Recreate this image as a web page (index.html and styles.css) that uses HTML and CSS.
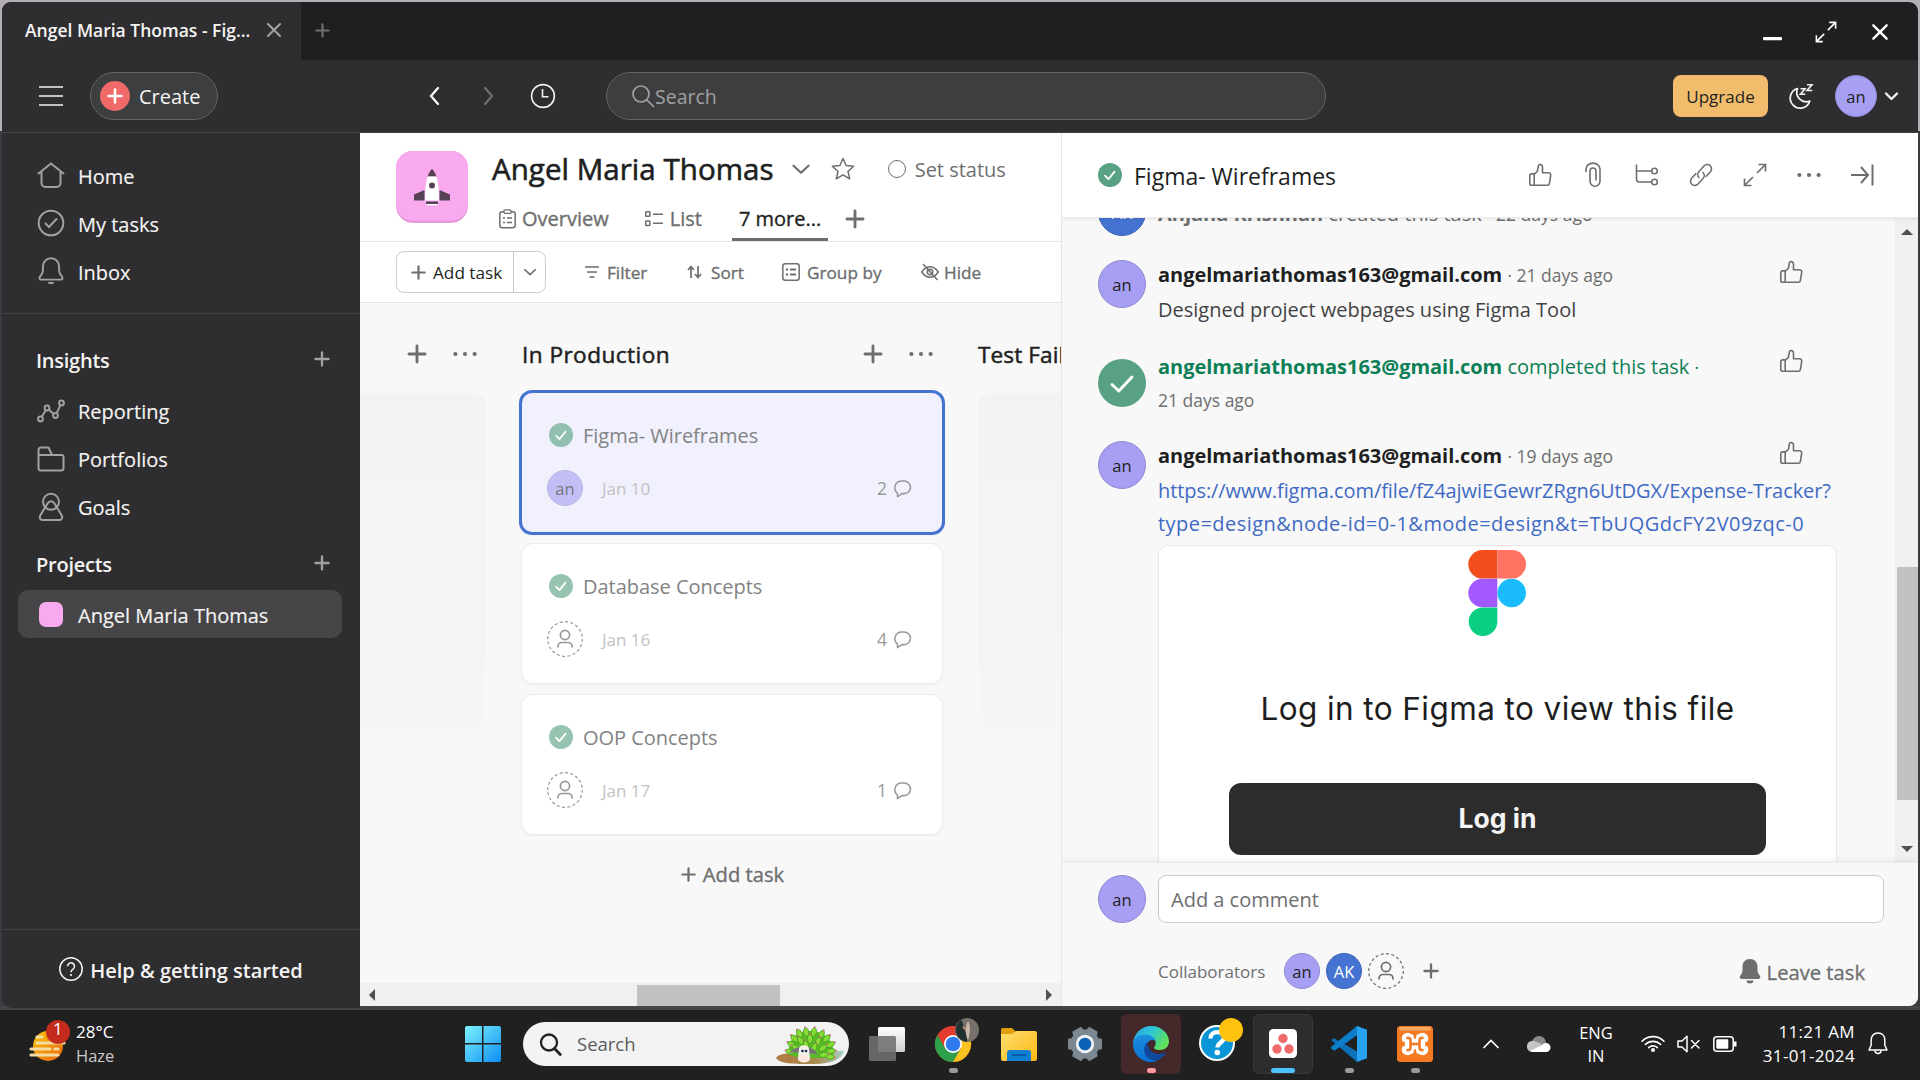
FILE: index.html
```html
<!DOCTYPE html>
<html lang="en">
<head>
<meta charset="utf-8">
<title>Angel Maria Thomas - Figma Wireframes</title>
<link rel="stylesheet" href="styles.css">
</head>
<body>
<svg class="defs" width="0" height="0" aria-hidden="true">
  <symbol id="plus" viewBox="0 0 24 24"><path d="M12 3.200v17.600M3.200 12h17.600" fill="none" stroke="currentColor" stroke-width="3.100" stroke-linecap="round"/></symbol>
  <symbol id="close" viewBox="0 0 24 24"><path d="M4 4l16 16M20 4L4 20" fill="none" stroke="currentColor" stroke-width="2.8" stroke-linecap="round"/></symbol>
  <symbol id="chev-down" viewBox="0 0 24 24"><path d="M3 8l9 8.5L21 8" fill="none" stroke="currentColor" stroke-width="2.6" stroke-linecap="round" stroke-linejoin="round"/></symbol>
  <symbol id="dots" viewBox="0 0 24 24"><g fill="currentColor"><circle cx="2.4" cy="12" r="2.1"/><circle cx="12" cy="12" r="2.1"/><circle cx="21.6" cy="12" r="2.1"/></g></symbol>
  <symbol id="done" viewBox="0 0 24 24"><circle cx="12" cy="12" r="12" fill="#58a182"/><path d="M7 12.6l3.4 3.5L16.6 8.6" fill="none" stroke="#fff" stroke-width="1.7" stroke-linecap="round" stroke-linejoin="round"/></symbol>
  <symbol id="thumb" viewBox="0 0 24 24"><path d="M6.2 22.3H3.4a1.6 1.6 0 0 1-1.6-1.6v-8.2a1.6 1.6 0 0 1 1.6-1.6h2.8zM6.2 11.2l3.1-2.7 1.2-6c.3-1.4 4-1.5 4 1.700v5.600h6a2.200 2.200 0 0 1 2.200 2.600l-1.300 8a2.200 2.200 0 0 1-2.200 1.900h-13z" fill="none" stroke="currentColor" stroke-width="1.6" stroke-linejoin="round"/></symbol>
  <symbol id="expand" viewBox="0 0 24 24"><path d="M14 10l8.500-8.500M15.500 1.500h7v7M10 14l-8.500 8.500M1.500 15.500v7h7" fill="none" stroke="currentColor" stroke-width="1.700"/></symbol>
  <symbol id="person" viewBox="0 0 36 36"><circle cx="18" cy="18" r="17.300" fill="none" stroke="currentColor" stroke-width="1.200" stroke-dasharray="3 2.400"/><circle cx="18" cy="14" r="4.600" fill="none" stroke="currentColor" stroke-width="1.700"/><path d="M11 26.500v-1a4 4 0 0 1 4-4h6a4 4 0 0 1 4 4v1" fill="none" stroke="currentColor" stroke-width="1.700"/></symbol>
  <symbol id="bubble" viewBox="0 0 20 20"><path d="M4.700 18.500v-3.700A7.200 7.200 0 0 1 8.300 2h3.400a6.700 6.700 0 0 1 0 13.400H9.500z" fill="none" stroke="currentColor" stroke-width="1.600" stroke-linejoin="round"/></symbol>
  <symbol id="bell" viewBox="0 0 26 26"><path d="M13 1.200c-4.800 0-7.500 3.600-7.500 7.800v3.500c0 2.500-1.200 4-2.700 5.800-1 1.300-.5 2.700 1 2.700h18.400c1.500 0 2-1.400 1-2.700-1.500-1.800-2.700-3.300-2.700-5.800V9c0-4.200-2.700-7.800-7.500-7.800z" fill="none" stroke="currentColor" stroke-width="1.800"/><path d="M9.800 23.300h6.400a3.300 2.800 0 0 1-6.400 0z" fill="currentColor"/></symbol>
  <symbol id="mag" viewBox="0 0 24 24"><circle cx="10" cy="10" r="8" fill="none" stroke="currentColor" stroke-width="1.700"/><path d="M15.800 15.800l6.700 6.700" fill="none" stroke="currentColor" stroke-width="1.700" stroke-linecap="round"/></symbol>
</svg>

<div class="screen">
<div class="window">
  <div class="tabstrip">
    <div class="tab"><span class="tab-name">Angel Maria Thomas - Fig...</span><svg class="i tab-x"><use href="#close"/></svg></div>
    <svg class="i tab-new"><use href="#plus"/></svg>
    <div class="win-btns">
      <svg class="i wmin" viewBox="0 0 20 4"><rect width="20" height="3.200" rx="1" fill="#fff"/></svg>
      <svg class="i wmax"><use href="#expand"/></svg>
      <svg class="i wclose"><use href="#close"/></svg>
    </div>
  </div>

  <div class="topbar">
    <svg class="i burger" viewBox="0 0 24 20"><path d="M0 1h24M0 10h24M0 19h24" stroke="#f5f4f3" stroke-width="1.600"/></svg>
    <div class="create"><svg class="i" width="30" height="30" viewBox="0 0 30 30"><circle cx="15" cy="15" r="15" fill="#f06a6a"/><path d="M15 8.500v13M8.500 15h13" stroke="#fff" stroke-width="2.600" stroke-linecap="round"/></svg><span>Create</span></div>
    <svg class="i back" viewBox="0 0 12 20"><path d="M10 2L3 10l7 8" fill="none" stroke="#fff" stroke-width="2.200" stroke-linecap="round"/></svg>
    <svg class="i fwd" viewBox="0 0 12 20"><path d="M2 2l7 8-7 8" fill="none" stroke="#6d6e6f" stroke-width="2.200" stroke-linecap="round"/></svg>
    <svg class="i clock" viewBox="0 0 26 26"><circle cx="13" cy="13" r="11.400" fill="none" stroke="#f5f4f3" stroke-width="1.600"/><path d="M12.500 6v7.800h6" fill="none" stroke="#f5f4f3" stroke-width="1.600"/></svg>
    <div class="search"><svg class="i"><use href="#mag"/></svg><span>Search</span></div>
    <div class="upgrade">Upgrade</div>
    <svg class="i moon" viewBox="0 0 26 26"><path d="M9.500 5.500A10 10 0 1 0 21.800 18 9.500 9.500 0 0 1 9.500 5.500z" fill="none" stroke="#f5f4f3" stroke-width="1.700" stroke-linejoin="round"/><path d="M12.500 5.800h4.500l-4.500 5.400h4.800M19 1.800h5l-5 5.700h5.300" fill="none" stroke="#f5f4f3" stroke-width="1.600"/></svg>
    <div class="avatar a42">an</div>
    <svg class="i top-chev" viewBox="0 0 15 15"><path d="M2 4.500l5.500 5.500L13 4.500" fill="none" stroke="#f5f4f3" stroke-width="2.300" stroke-linecap="round" stroke-linejoin="round"/></svg>
  </div>

  <div class="body">
    <nav class="sidebar">
      <div class="nav-group first">
        <div class="nav-row"><svg class="i n" viewBox="0 0 28 28"><path d="M1.500 12.500L14 2.500l12.500 10M4.500 10.500v11.500a4 4 0 0 0 4 4h11a4 4 0 0 0 4-4V10.500" fill="none" stroke="currentColor" stroke-width="2" stroke-linecap="round"/></svg><span>Home</span></div>
        <div class="nav-row"><svg class="i n" viewBox="0 0 28 28"><circle cx="14" cy="14" r="12.300" fill="none" stroke="currentColor" stroke-width="2"/><path d="M8.500 14.500l3.500 3.500L19.500 10" fill="none" stroke="currentColor" stroke-width="2" stroke-linecap="round"/></svg><span>My tasks</span></div>
        <div class="nav-row"><svg class="i n"><use href="#bell"/></svg><span>Inbox</span></div>
      </div>
      <div class="nav-head"><span>Insights</span><svg class="i"><use href="#plus"/></svg></div>
      <div class="nav-group">
        <div class="nav-row"><svg class="i n" viewBox="0 0 28 28"><g fill="none" stroke="currentColor" stroke-width="2"><circle cx="3.500" cy="22" r="2.400"/><circle cx="10" cy="11" r="2.400"/><circle cx="18.500" cy="18.500" r="2.400"/><circle cx="24.500" cy="6" r="2.400"/><path d="M4.700 19.800l4-6.500M12 12.700l4.700 4.200M19.600 16.300l3.800-8.200"/></g></svg><span class="t-rep">Reporting</span></div>
        <div class="nav-row"><svg class="i n" viewBox="0 0 28 28"><path d="M1 10h23.500a2 2 0 0 1 2 2v11a2.500 2.500 0 0 1-2.500 2.500H4A2.500 2.500 0 0 1 1.500 23V5A2.500 2.500 0 0 1 4 2.500h7.500L15 10" fill="none" stroke="currentColor" stroke-width="2" stroke-linejoin="round"/></svg><span>Portfolios</span></div>
        <div class="nav-row"><svg class="i n" viewBox="0 0 28 28"><circle cx="14" cy="8.800" r="8" fill="none" stroke="currentColor" stroke-width="2"/><path d="M10.500 10.500c1.500-3 5.500-3 7 0l7 11.500c1.500 2.500.500 5-2 5h-17c-2.500 0-3.500-2.500-2-5z" fill="none" stroke="currentColor" stroke-width="2"/></svg><span>Goals</span></div>
      </div>
      <div class="nav-head proj"><span>Projects</span><svg class="i"><use href="#plus"/></svg></div>
      <div class="nav-row sel"><i class="swatch"></i><span>Angel Maria Thomas</span></div>
      <div class="help"><svg class="i" width="24" height="24" viewBox="0 0 24 24"><circle cx="12" cy="12" r="11.200" fill="none" stroke="#f5f4f3" stroke-width="1.500"/><path d="M8.500 9.300a3.500 3.500 0 1 1 5.300 3c-1.200.8-1.800 1.400-1.800 3" fill="none" stroke="#f5f4f3" stroke-width="1.500"/><circle cx="12" cy="18" r="1.100" fill="#f5f4f3"/></svg><span>Help &amp; getting started</span></div>
    </nav>

    <main class="main">
      <header class="phead">
        <svg class="i tile" viewBox="0 0 72 72"><rect width="72" height="72" rx="17" fill="#e59bdd"/><rect width="72" height="69.500" rx="17" fill="#f9aaef"/><path d="M36 18c-2 2-3.500 4.500-4.300 7.500h8.600C39.500 22.500 38 20 36 18z" fill="#574155"/><path d="M31.700 25.500h8.600c1.200 3 2 7 2.200 11l.7 13H28.800l.7-13c.2-4 1-8 2.200-11z" fill="#fff"/><circle cx="36" cy="34.500" r="3" fill="#574155"/><path d="M28.500 39L18 43.500v6h10.500zM43.500 39L54 43.500v6H43.500zM30 50.500h12V53H30z" fill="#574155"/><path d="M30 53h12l-1 1.300H31z" fill="#fff"/></svg>
        <div class="pinfo">
          <div class="ptitle"><h1>Angel Maria Thomas</h1><svg class="i pchev"><use href="#chev-down"/></svg>
            <svg class="i pstar" viewBox="0 0 24 24"><path d="M12 1.500l3.100 7 7.600.7-5.700 5.100 1.700 7.500L12 17.900l-6.700 3.900L7 14.300 1.300 9.200l7.600-.7z" fill="none" stroke="currentColor" stroke-width="1.500" stroke-linejoin="round"/></svg>
            <i class="ring"></i><span>Set status</span></div>
          <div class="ptabs">
            <div class="pt"><svg class="i" width="17" height="20" viewBox="0 0 17 20"><rect x=".8" y="2.800" width="15.400" height="16" rx="2.500" fill="none" stroke="currentColor" stroke-width="1.500"/><rect x="5" y=".8" width="7" height="3.500" rx="1" fill="#fff" stroke="currentColor" stroke-width="1.300"/><path d="M4 9h2M8 9h5M4 13.500h2M8 13.500h5" stroke="currentColor" stroke-width="1.500"/></svg><span>Overview</span></div>
            <div class="pt list"><svg class="i" width="18" height="16" viewBox="0 0 18 16"><g fill="none" stroke="currentColor" stroke-width="1.500"><rect x=".8" y=".8" width="4" height="4.500" rx=".5"/><rect x=".8" y="10" width="4" height="4.500" rx=".5"/><path d="M8 3.200h10M8 12.300h10"/></g></svg><span>List</span></div>
            <div class="pt on"><span>7 more...</span></div>
            <svg class="i" width="22" height="22"><use href="#plus"/></svg>
          </div>
        </div>
      </header>
      <div class="tools">
        <div class="addbtn"><svg class="i" width="17" height="17"><use href="#plus"/></svg><span>Add task</span><div class="split"><svg class="i" width="14" height="14"><use href="#chev-down"/></svg></div></div>
        <div class="tool t1"><svg class="i" width="14" height="14" viewBox="0 0 14 14"><path d="M0 2h14M2 7h10M4.500 12h5" stroke="currentColor" stroke-width="1.600"/></svg><span>Filter</span></div>
        <div class="tool t2"><svg class="i" width="15" height="14" viewBox="0 0 15 14"><path d="M4 13V2M1 5l3-3.500L7 5M11 1v11M8 9l3 3.500L14 9" fill="none" stroke="currentColor" stroke-width="1.700"/></svg><span>Sort</span></div>
        <div class="tool t3"><svg class="i" width="18" height="18" viewBox="0 0 18 18"><rect x=".8" y=".8" width="16.400" height="16.400" rx="2.500" fill="none" stroke="currentColor" stroke-width="1.500"/><path d="M3.800 6.500h2.400M8 6.500h6M3.800 11.500h2.400M8 11.500h6" stroke="currentColor" stroke-width="1.900"/></svg><span>Group by</span></div>
        <div class="tool t4"><svg class="i" width="18" height="18" viewBox="0 0 18 18"><g fill="none" stroke="currentColor" stroke-width="1.500"><path d="M.8 9C3 5.500 6 3.800 9 3.800s6 1.700 8.200 5.200c-2.200 3.500-5.200 5.200-8.200 5.200S3 12.500.8 9z"/><circle cx="9" cy="9" r="2.700"/><path d="M2 1l14.500 16"/></g></svg><span>Hide</span></div>
      </div>
      <div class="board">
        <section class="col c1">
          <div class="chead"><svg class="i" width="22" height="22"><use href="#plus"/></svg><svg class="i" width="24" height="24"><use href="#dots"/></svg></div>
          <div class="well"></div>
        </section>
        <section class="col c2">
          <div class="chead"><h2>In Production</h2><svg class="i" width="22" height="22"><use href="#plus"/></svg><svg class="i" width="24" height="24"><use href="#dots"/></svg></div>
          <article class="card active">
            <div class="ct"><svg class="i"><use href="#done"/></svg><span>Figma- Wireframes</span></div>
            <div class="cm"><div class="avatar a36">an</div><span class="due">Jan 10</span><span class="cnt">2</span><svg class="i"><use href="#bubble"/></svg></div>
          </article>
          <article class="card">
            <div class="ct"><svg class="i"><use href="#done"/></svg><span>Database Concepts</span></div>
            <div class="cm"><svg class="i p36"><use href="#person"/></svg><span class="due">Jan 16</span><span class="cnt">4</span><svg class="i"><use href="#bubble"/></svg></div>
          </article>
          <article class="card">
            <div class="ct"><svg class="i"><use href="#done"/></svg><span>OOP Concepts</span></div>
            <div class="cm"><svg class="i p36"><use href="#person"/></svg><span class="due">Jan 17</span><span class="cnt">1</span><svg class="i"><use href="#bubble"/></svg></div>
          </article>
          <div class="coladd"><svg class="i" width="17" height="17"><use href="#plus"/></svg><span>Add task</span></div>
        </section>
        <section class="col c3">
          <div class="chead"><h2>Test Fail</h2></div>
          <div class="well"></div>
        </section>
      </div>
      <div class="hscroll"><svg class="i" width="8" height="12" viewBox="0 0 8 12"><path d="M7 0v12L1 6z" fill="#505050"/></svg><i></i><svg class="i" width="8" height="12" viewBox="0 0 8 12"><path d="M1 0v12l6-6z" fill="#505050"/></svg></div>
    </main>

    <aside class="panel">
      <header class="dhead">
        <svg class="i" width="24" height="24"><use href="#done"/></svg><h3>Figma- Wireframes</h3>
        <div class="acts">
          <svg class="i"><use href="#thumb"/></svg>
          <svg class="i" viewBox="1 0 24 24"><path d="M5 8.500V6a6.500 5.500 0 0 1 14 0v12a5 5.300 0 0 1-10 0V8a3 3 0 0 1 6 0v9" fill="none" stroke="currentColor" stroke-width="1.600" stroke-linecap="round"/></svg>
          <svg class="i" viewBox="1 0 24 24"><g fill="none" stroke="currentColor" stroke-width="1.600"><path d="M1.500 1.500v14.500a3 3 0 0 0 3 3H17M1.500 8H16.500"/><circle cx="19.500" cy="8" r="2.800"/><circle cx="19.500" cy="19" r="2.800"/></g></svg>
          <svg class="i" viewBox="1 0 24 24"><g fill="none" stroke="currentColor" stroke-width="1.600" stroke-linecap="round"><path d="M10 14.500c-1.700-1.700-1.700-4.300 0-6L15 3c1.700-1.700 4.500-2 6.200-.3s1.700 4.600 0 6.300l-4 4.300"/><path d="M14 9.500c1.700 1.700 1.700 4.300 0 6L9 21c-1.700 1.700-4.500 2-6.200.3s-1.700-4.600 0-6.300l4-4.300"/></g></svg>
          <svg class="i"><use href="#expand"/></svg>
          <svg class="i"><use href="#dots"/></svg>
          <svg class="i" viewBox="1 0 24 24"><path d="M1 12h16M11 4l7 8-7 8M22.500 1.500v21" fill="none" stroke="currentColor" stroke-width="2"/></svg>
        </div>
      </header>
      <div class="feedwrap">
        <div class="feed">
          <div class="story s1"><div class="avatar a48 blue">AK</div><div class="sb"><p class="ln gray"><b>Anjana Krishnan</b> created this task <small>· 22 days ago</small></p></div></div>
          <div class="story s2"><div class="avatar a48">an</div><div class="sb"><p class="ln"><b>angelmariathomas163@gmail.com</b> <small>· 21 days ago</small></p><p class="tx">Designed project webpages using Figma Tool</p></div><svg class="i like"><use href="#thumb"/></svg></div>
          <div class="story s3"><svg class="i big" viewBox="0 0 48 48"><circle cx="24" cy="24" r="24" fill="#58a182"/><path d="M14 25.500l6.800 6.500L34 18" fill="none" stroke="#fff" stroke-width="3" stroke-linecap="round" stroke-linejoin="round"/></svg><div class="sb"><p class="ln green"><b>angelmariathomas163@gmail.com</b> <span class="comp">completed this task</span> <small>·</small></p><p class="when">21 days ago</p></div><svg class="i like"><use href="#thumb"/></svg></div>
          <div class="story s4"><div class="avatar a48">an</div><div class="sb"><p class="ln"><b>angelmariathomas163@gmail.com</b> <small>· 19 days ago</small></p><p class="tx url"><span class="u1">https://www.figma.com/file/fZ4ajwiEGewrZRgn6UtDGX/Expense-Tracker?</span><br><span class="u2">type=design&amp;node-id=0-1&amp;mode=design&amp;t=TbUQGdcFY2V09zqc-0</span></p>
            <div class="embed">
              <svg class="i" width="58" height="86" viewBox="0.7 0 58 86"><path d="M29 0H14.300a14.300 14.300 0 0 0 0 28.600H29z" fill="#f24e1e"/><path d="M29 0h14.500a14.300 14.300 0 0 1 0 28.600H29z" fill="#ff7262"/><path d="M29 28.700H14.300a14.300 14.300 0 0 0 0 28.600H29z" fill="#a259ff"/><circle cx="43.400" cy="43" r="14.300" fill="#1abcfe"/><path d="M29 57.400H14.300A14.300 14.300 0 1 0 29 71.700z" fill="#0acf83"/></svg>
              <div class="etitle">Log in to Figma to view this file</div>
              <div class="elogin">Log in</div>
            </div></div><svg class="i like"><use href="#thumb"/></svg></div>
        </div>
        <div class="vscroll"><svg class="i" width="12" height="8" viewBox="0 0 12 8"><path d="M0 7h12L6 1z" fill="#505050"/></svg><i></i><svg class="i" width="12" height="8" viewBox="0 0 12 8"><path d="M0 1h12L6 7z" fill="#505050"/></svg></div>
      </div>
      <footer class="dfoot">
        <div class="crow"><div class="avatar a48">an</div><div class="cinput"><span>Add a comment</span></div></div>
        <div class="collab"><span class="t-col">Collaborators</span><div class="avatar a36">an</div><div class="avatar a36 blue">AK</div><svg class="i p36"><use href="#person"/></svg><svg class="i cplus" width="18" height="18"><use href="#plus"/></svg>
          <div class="leave"><svg class="i" width="24" height="26" viewBox="0 0 24 26"><path d="M12 1c-4.800 0-7.500 3.400-7.500 7.600V12c0 2.400-.900 3.700-2.100 5.300C1.200 19 1.500 21 3.500 21h17c2 0 2.300-2 1.100-3.700-1.200-1.600-2.100-2.900-2.100-5.300V8.600C19.500 4.400 16.800 1 12 1zM8.500 22.500h7a3.500 3 0 0 1-7 0z" fill="#6d6e6f"/></svg><span>Leave task</span></div></div>
      </footer>
    </aside>
  </div>
</div>

<div class="taskbar">
  <div class="weather">
    <svg class="i" width="42" height="42" viewBox="0 0 42 42"><defs><linearGradient id="sun" x1="0" y1="0" x2="1" y2="1"><stop offset="0" stop-color="#fdc70c"/><stop offset="1" stop-color="#e8620c"/></linearGradient></defs><circle cx="19" cy="26" r="15" fill="url(#sun)"/><g stroke="#f3dca3" stroke-width="3.200" stroke-linecap="round"><path d="M8 17h5M8 23h27M2 29h19M26 29h3M2 35h27"/></g><circle cx="29" cy="12" r="12" fill="#c42b1c"/></svg>
    <b class="wbadge">1</b>
    <div class="wtext"><span>28°C</span><span class="haze">Haze</span></div>
  </div>
  <svg class="i start" viewBox="0 0 36 36"><defs><linearGradient id="win" x1="0" y1="0" x2="1" y2="1"><stop offset="0" stop-color="#7df3fd"/><stop offset="1" stop-color="#0c8ef5"/></linearGradient></defs><path d="M2 0h15v17H0V2a2 2 0 0 1 2-2zM18.500 0H34a2 2 0 0 1 2 2v15H18.500zM0 18.500h17V36H2a2 2 0 0 1-2-2zM18.500 18.500H36V34a2 2 0 0 1-2 2H18.500z" fill="url(#win)"/></svg>
  <div class="tsearch"><svg class="i" width="24" height="24" viewBox="0 0 24 24"><circle cx="10" cy="10.500" r="8" fill="none" stroke="#222" stroke-width="2.300"/><path d="M15.500 16.500l5.800 6" stroke="#222" stroke-width="2.800" stroke-linecap="round"/></svg><span>Search</span>
    <svg class="i dragon" width="70" height="40" viewBox="0 0 70 40"><defs><g id="leaf"><path d="M0 0c-3.500-3-3.500-7 0-10 3.500 3 3.500 7 0 10z" fill="#86dc35" stroke="#3f9e1b" stroke-width=".8"/><circle cx="0" cy="-10" r=".9" fill="#e8618c"/></g><linearGradient id="gnd"><stop offset="0" stop-color="#b07a42"/><stop offset=".6" stop-color="#a88a50"/><stop offset="1" stop-color="#a9d3c6"/></linearGradient></defs>
      <path d="M0 32c6-7 20-4 34-4 12 0 22-4 34-3-2 8-12 13-30 13C18 38 4 38 0 32z" fill="url(#gnd)"/>
      <path d="M14 29c-4-14 6-24 20-24s25 10 23 24l-12 3H24z" fill="#5cbb29"/>
      <g><use href="#leaf" transform="translate(19 27) rotate(-75)"/><use href="#leaf" transform="translate(20 21) rotate(-60)"/><use href="#leaf" transform="translate(22 16) rotate(-45)"/><use href="#leaf" transform="translate(26 12) rotate(-30)"/><use href="#leaf" transform="translate(31 11) rotate(-10)"/><use href="#leaf" transform="translate(37 11) rotate(10)"/><use href="#leaf" transform="translate(43 13) rotate(28)"/><use href="#leaf" transform="translate(47 16) rotate(45)"/><use href="#leaf" transform="translate(50 21) rotate(62)"/><use href="#leaf" transform="translate(50 26) rotate(80)"/><use href="#leaf" transform="translate(49 30) rotate(98)"/><use href="#leaf" transform="translate(24 25) rotate(-55)"/><use href="#leaf" transform="translate(27 19) rotate(-30)"/><use href="#leaf" transform="translate(34 18)"/><use href="#leaf" transform="translate(40 20) rotate(24)"/><use href="#leaf" transform="translate(43 25) rotate(52)"/><use href="#leaf" transform="translate(43 30) rotate(76)"/><use href="#leaf" transform="translate(31 24) rotate(-12)"/><use href="#leaf" transform="translate(36 26) rotate(25)"/></g>
      <path d="M13 27c4-5 9-6 12-6l2 7c-5-2-10-2-14-1zM42 29c-3-5-6-7-9-8v7c3-1 6 0 9 1z" fill="#77727a"/>
      <path d="M23 23c0-5 10-5 10 0l1 9c0 5-12 5-12 0z" fill="#f4eee8"/><ellipse cx="28" cy="33" rx="6" ry="3.500" fill="#fbe7df"/><circle cx="26.500" cy="25" r="1.300" fill="#15234f"/><circle cx="30" cy="25" r="1.300" fill="#15234f"/></svg></div>
  <svg class="i app a1" viewBox="0 0 36 36"><defs><linearGradient id="tv" x1="0" y1="0" x2="0" y2="1"><stop offset="0" stop-color="#fff"/><stop offset="1" stop-color="#cfcfcf"/></linearGradient></defs><rect x="9" y="1" width="27" height="25" rx="1.500" fill="url(#tv)"/><rect x="0" y="10" width="27" height="25" rx="1.500" fill="#6f6f6f" opacity=".88"/></svg>
  <div class="app chrome run"><svg class="i" width="46" height="46" viewBox="0 0 46 46"><g transform="translate(0 8)"><circle cx="18" cy="18" r="18" fill="#e33b2e"/><path d="M2.400 9A18 18 0 0 0 18 36l7.800-13.500L18 27l-7.800-4.500z" fill="#2da04c"/><path d="M33.600 9A18 18 0 0 1 18 36l7.800-13.500V9z" fill="#fcc31e"/><circle cx="18" cy="18" r="9" fill="#fff"/><circle cx="18" cy="18" r="7.300" fill="#2f7bee"/></g><circle cx="32" cy="12" r="12" fill="#77716b"/><path d="M26 1.700c3 4 2 6 3 9s4 6 3 13A12 12 0 0 1 26 1.700z" fill="#20312f"/><path d="M33 3c3 5 2 14 0 19-3-5-3-13 0-19z" fill="#c8bba8"/><path d="M27 9c3-2 4 1 3.500 4z" fill="#b98a6c"/></svg></div>
  <svg class="i app folder" viewBox="0 0 36 36"><defs><linearGradient id="fo" x1="0" y1="0" x2="1" y2="1"><stop offset="0" stop-color="#ffdf72"/><stop offset="1" stop-color="#f9b812"/></linearGradient></defs><path d="M0 4a2 2 0 0 1 2-2h9l4 4-2 4H0z" fill="#e19f0a"/><path d="M0 8h11l4-3h19a2 2 0 0 1 2 2v26a2 2 0 0 1-2 2H2a2 2 0 0 1-2-2z" fill="url(#fo)"/><path d="M6 35v-8a3 3 0 0 1 3-3h18a3 3 0 0 1 3 3v8z" fill="#0f7fd1"/><path d="M11 29h14" stroke="#0a4f96" stroke-width="1.500"/></svg>
  <svg class="i app gear" viewBox="0 0 36 36"><g fill="#7b8791"><circle cx="18" cy="18" r="14.500"/><path d="M13 1h10l2 8H11zM13 35h10l2-8H11z" transform="rotate(30 18 18)"/><path d="M13 1h10l2 8H11zM13 35h10l2-8H11z" transform="rotate(90 18 18)"/><path d="M13 1h10l2 8H11zM13 35h10l2-8H11z" transform="rotate(150 18 18)"/></g><circle cx="18" cy="18" r="9.200" fill="#eef1f3"/><circle cx="18" cy="18" r="6.300" fill="#0a61b5"/></svg>
  <div class="tbox edge run"><svg class="i" width="36" height="36" viewBox="0 0 36 36"><defs><linearGradient id="e1" x1="0" y1="0" x2="1" y2=".5"><stop offset="0" stop-color="#2b9fe0"/><stop offset=".5" stop-color="#2fc6d6"/><stop offset="1" stop-color="#5fe05a"/></linearGradient><linearGradient id="e2" x1="0" y1="0" x2="0" y2="1"><stop offset="0" stop-color="#1c8fe0"/><stop offset="1" stop-color="#0a6fd0"/></linearGradient></defs><path d="M0 17C1 7 9 0 18 0c11 0 18 8 18 15.500 0 5-4 8.500-9 8.500-5.500 0-6.500-2-5.500-3.300 3-4 .5-9.700-6-9.700C8 11 1 14 0 17z" fill="url(#e1)"/><path d="M0 17c1-5 6-8.500 12-8.500 7 0 10.500 4.500 10.500 7-4-3.500-9 0-9 5.500 0 8 7 13.500 13 12C23.500 35.500 20 36 18 36 8 36-.500 28 0 17z" fill="url(#e2)"/><path d="M14.500 15.500c-8 9 0 21 10 18.500 4-1.300 7.300-4.500 9-8-8 4.500-19 1.500-19-10.500z" fill="#10479c"/></svg></div>
  <svg class="i app qhelp" width="46" height="46" viewBox="0 0 46 46"><circle cx="18" cy="26" r="17" fill="#0a96d6" stroke="#fff" stroke-width="2"/><path d="M11.500 21.500c0-8.500 13.500-8 13.500-1 0 5-6.500 5-6.500 10" fill="none" stroke="#fff" stroke-width="4.300"/><circle cx="18.300" cy="35.500" r="2.800" fill="#fff"/><circle cx="32" cy="13" r="12" fill="#ffc20f"/></svg>
  <div class="tbox asana run"><svg class="i" width="28" height="29" viewBox="0 0 28 29"><rect width="28" height="29" rx="4.500" fill="#fff"/><g fill="#f06a6a"><circle cx="14" cy="9.500" r="4.700"/><circle cx="8" cy="20" r="4.700"/><circle cx="20" cy="20" r="4.700"/></g></svg></div>
  <div class="app vsc run"><svg class="i" width="36" height="36" viewBox="0 0 36 36"><path d="M26 0L8.500 16 3.500 12.200 0 14l26 22V25.500L13.500 18 26 9z" fill="#0b70b8"/><path d="M0 22.500l3.500 2.300L26 9V0L0 21z" fill="#0c7fcb"/><path d="M26 0l10 3.700v28.600L26 36z" fill="#27a3f2"/></svg></div>
  <div class="app xam run"><svg class="i" width="36" height="36" viewBox="0 0 36 36"><rect width="36" height="36" rx="3.500" fill="#f37a20"/><rect x="2" y="1" width="32" height="3.500" rx="1.700" fill="#f9a866"/><rect x="6.500" y="8.500" width="23" height="19" rx="6" fill="#fff"/><g fill="#fff"><circle cx="10.500" cy="12.500" r="5.800"/><circle cx="25.500" cy="12.500" r="5.800"/><circle cx="10.500" cy="23.500" r="5.800"/><circle cx="25.500" cy="23.500" r="5.800"/></g><g fill="none" stroke="#f37a20" stroke-width="2.600" stroke-linecap="round"><path d="M10.500 12c1.500-.5 3 .5 3 2.500v7c0 2-1.500 3-3 2.500M25.500 12c-1.500-.5-3 .5-3 2.500v7c0 2 1.500 3 3 2.500M14 18h8"/></g><path d="M16.500 6.500h3l-1.500 6zM16.500 29.500h3l-1.500-6zM4 18l3-1.500v3zM32 18l-3-1.500v3z" fill="#f37a20" stroke="#f37a20" stroke-width="1.500"/></svg></div>
  <svg class="i tup" viewBox="0 0 16 10"><path d="M1 8.500L8 1.500l7 7" fill="none" stroke="#fff" stroke-width="1.700" stroke-linecap="round"/></svg>
  <svg class="i cloud" viewBox="0 0 24 16"><circle cx="12" cy="7" r="7" fill="#8a8a8a"/><path d="M0 11a5.500 5.500 0 0 1 7-6l8 3-9 8H5a5 5 0 0 1-5-5z" fill="#c4c4c4"/><path d="M3 15l12-6a5 5 0 0 1 4-2 4.500 4.500 0 0 1 0 9H5z" fill="#fff"/></svg>
  <div class="lang"><span>ENG</span><span>IN</span></div>
  <svg class="i wifi" viewBox="0 0 24 17"><g fill="none" stroke="#fff" stroke-width="1.600" stroke-linecap="round"><path d="M1 6.200a15.500 15.500 0 0 1 22 0M4.300 9.500a11 11 0 0 1 15.400 0M7.700 12.600a6.300 6.300 0 0 1 8.600 0"/></g><circle cx="12" cy="15" r="2" fill="#fff"/></svg>
  <svg class="i mute" viewBox="0 0 24 18"><path d="M1 6h4l5-4.800v15.600L5 12H1zM14.500 5.500l7.500 7.500M22 5.500L14.500 13" fill="none" stroke="#fff" stroke-width="1.500" stroke-linejoin="round" stroke-linecap="round"/></svg>
  <svg class="i batt" viewBox="0 0 24 16"><rect x=".8" y=".8" width="19.400" height="14.400" rx="3" fill="none" stroke="#fff" stroke-width="1.500"/><rect x="3.300" y="3.300" width="12" height="9.400" rx="1" fill="#fff"/><path d="M22 5.500v5" stroke="#fff" stroke-width="3"/></svg>
  <div class="time"><span>11:21 AM</span><span>31-01-2024</span></div>
  <svg class="i tbell" viewBox="0 0 20 23"><path d="M10 1c-4.300 0-6.800 3.200-6.800 7v5L1 18h18l-2.200-5V8c0-3.800-2.500-7-6.800-7z" fill="none" stroke="#fff" stroke-width="1.500" stroke-linejoin="round"/><path d="M7 18.500a3 3 0 0 0 6 0" fill="none" stroke="#fff" stroke-width="1.500"/></svg>
</div>
</div>
</body>
</html>
```
FILE: styles.css
```css
* { box-sizing: border-box; }
body { margin: 0; font-family: "Open Sans", "Noto Sans", sans-serif; font-size: 20px; color: #1e1f21; }
h1, h2, h3, p { margin: 0; font-weight: 400; }
span, small, b { white-space: nowrap; }
.defs { display: block; position: absolute; }
.i { display: block; flex: none; overflow: visible; }
.screen { width: 1920px; height: 1080px; overflow: hidden; display: flex; flex-direction: column; background: #444547; }
.window { height: 1006px; flex: none; padding: 2px 2px 0; display: flex; flex-direction: column; background: linear-gradient(#b3adb8 131px, #3a3b3f 131px); }

/* window tabs */
.tabstrip { height: 58px; flex: none; background: #1e1f21; border-radius: 9px 9px 0 0; display: flex; align-items: center; color: #a2a0a2; }
.tab { width: 299px; height: 58px; background: #2e2e30; border-radius: 9px 0 0 0; display: flex; align-items: center; padding: 0 18px 2px 23px; }
.tab-name { color: #f5f4f3; font-weight: 600; font-size: 17.500px; flex: 1; }
.tab-x { width: 18px; height: 18px; }
.tab-new { width: 17px; height: 17px; margin: -2px 0 0 13px; color: #6d6e6f; }
.win-btns { margin-left: auto; display: flex; align-items: center; color: #fff; padding: 2px 28px 0 0; }
.wmin { width: 19px; height: 4px; margin: 13px 33px 0 0; }
.wmax { width: 22px; height: 22px; margin-right: 33px; }
.wclose { width: 20px; height: 20px; }

/* top bar */
.topbar { height: 73px; flex: none; background: #2e2e30; border-bottom: 1px solid #424244; display: flex; align-items: center; padding-left: 37px; color: #f5f4f3; }
.burger { width: 24px; height: 20px; margin-right: 27px; }
.create { width: 128px; height: 48px; border: 1px solid #636466; border-radius: 24px; background: #3d3e40; display: flex; align-items: center; padding-left: 9px; gap: 9px; }
.create span, .search span { padding-top: 1px; }
.back { width: 12px; height: 20px; margin-left: 210px; }
.fwd { width: 12px; height: 20px; margin-left: 43px; }
.clock { width: 26px; height: 26px; margin-left: 35px; }
.search { width: 720px; height: 48px; margin-left: 50px; border: 1px solid #636466; border-radius: 24px; background: #3d3e40; display: flex; align-items: center; padding-left: 24px; color: #a2a0a2; }
.search .i { width: 24px; height: 24px; }
.search span { font-size: 19.500px; }
.upgrade { width: 95px; height: 42px; margin-left: 347px; border-radius: 8px; background: #f1bd6c; color: #1e1f21; font-size: 17px; display: flex; align-items: center; justify-content: center; }
.moon { width: 26px; height: 26px; margin: 0 21px 0 20px; }
.top-chev { width: 15px; height: 15px; margin-left: 7px; }
.avatar { flex: none; border-radius: 50%; background: #a69ff3; border: 1.5px solid #9089d3; color: #1e1f21; display: flex; align-items: center; justify-content: center; font-size: 16.500px; }
.a42 { width: 42px; height: 42px; }
.a48 { width: 48px; height: 48px; }
.a36 { width: 36px; height: 36px; }
.blue { background: #4573d2; border-color: #3c63b5; color: #fff; }
.body { flex: 1; min-height: 0; display: flex; }

/* sidebar */
.sidebar { width: 358px; flex: none; height: 875px; background: #2e2e30; border-radius: 0 0 0 10px; display: flex; flex-direction: column; color: #f5f4f3; }
.nav-row { height: 48px; display: flex; align-items: center; padding-left: 35px; gap: 13px; -webkit-text-stroke: .15px; }
.n { width: 28px; height: 28px; color: #a2a0a2; }
.first { padding: 18px 0 18px; border-bottom: 1px solid #424244; }
.first span, .sel span { padding-top: 2px; }
.nav-head { height: 48px; margin: 22px 0 3px; padding: 0 29px 0 34px; display: flex; align-items: center; justify-content: space-between; font-weight: 600; letter-spacing: -.25px; }
.nav-head .i { width: 18px; height: 18px; margin-bottom: 2px; color: #a2a0a2; }
.proj { margin: 9px 0 2px; }
.sel { margin: 0 18px 0 16px; padding-left: 21px; gap: 15px; background: #464648; border-radius: 10px; }
.swatch { width: 24px; height: 25px; border-radius: 7px; background: #f9aaef; }
.help { margin-top: auto; height: 79px; border-top: 1px solid #424244; display: flex; align-items: center; justify-content: center; gap: 7px; font-weight: 600; }
.help span { padding-top: 2px; }

/* project */
.main { width: 701px; flex: none; background: #fff; display: flex; flex-direction: column; overflow: hidden; color: #6d6e6f; }
.phead { height: 109px; flex: none; border-bottom: 1px solid #e6e4e5; padding: 18px 0 0 36px; display: flex; gap: 24px; }
.tile { width: 72px; height: 72px; }
.ptitle { height: 40px; display: flex; align-items: center; margin-top: -2px; }
.ptitle h1 { font-size: 29.500px; line-height: 40px; color: #1e1f21; white-space: nowrap; letter-spacing: .05px; -webkit-text-stroke: .6px; }
.pchev { width: 20px; height: 20px; margin-left: 17px; }
.pstar { width: 24px; height: 24px; margin-left: 20px; }
.ring { width: 18px; height: 18px; border: 1.500px solid #6d6e6f; border-radius: 50%; margin: 0 9px 0 33px; }
.ptabs { height: 52px; display: flex; align-items: center; padding-left: 7px; }
.pt { height: 52px; display: flex; align-items: center; gap: 6px; padding-top: 7px; -webkit-text-stroke: .35px; }
.ptabs > .i { margin-top: 7px; }
.pt.list { margin: 0 30px 0 36px; }
.pt.list .i { margin-right: 1px; }
.pt.on { color: #1e1f21; border-bottom: 3px solid #6d6e6f; padding: 10px 7px 0; margin-right: 16px; }
.tools { height: 61px; flex: none; border-bottom: 1px solid #e6e4e5; display: flex; align-items: center; padding-left: 36px; font-size: 17.200px; }
.addbtn { width: 150px; height: 42px; border: 1px solid #cfcbcb; border-radius: 8px; display: flex; align-items: center; padding-left: 13px; gap: 6px; }
.addbtn > span { color: #1e1f21; flex: 1; }
.split { width: 32px; height: 40px; border-left: 1px solid #cfcbcb; display: flex; align-items: center; justify-content: center; }
.tool { display: flex; align-items: center; gap: 8px; -webkit-text-stroke: .35px; }
.t1 { margin-left: 39px; width: 102px; } .t2 { width: 95px; gap: 9px; } .t3 { width: 139px; gap: 7px; } .t4 { gap: 5px; }

.board { flex: 1; background: #f8f8f8; display: flex; gap: 35px; overflow: hidden; padding-top: 27px; }
.col { flex: none; display: flex; flex-direction: column; }
.c1 { width: 126px; } .c2 { width: 422px; } .c3 { width: 83px; }
.chead { height: 48px; display: flex; align-items: center; gap: 25px; padding-right: 9px; }
.c1 .chead { justify-content: flex-end; }
.c2 .chead { padding: 0 10px 0 1px; }
.c3 .chead { padding-right: 0; }
.chead h2 { font-size: 22.600px; padding-top: 1px; color: #1e1f21; flex: 1; white-space: nowrap; letter-spacing: .45px; -webkit-text-stroke: .5px; }
.c3 h2 { letter-spacing: .1px; }
.well { height: 520px; margin-top: 15px; border-radius: 0 12px 0 0; background: linear-gradient(#f4f2f3, #f8f8f8); }
.c3 .well { border-radius: 12px 0 0 0; }
.card { height: 141px; margin-top: 10px; background: #fff; border: 1px solid #edeaea; border-radius: 12px; box-shadow: 0 1px 2px #0000000a; padding: 29px 30px 0 25px; color: #828384; }
.card.active { height: 145px; margin: 12px -2px -2px; background: #f1f1fd; border: 3px solid #4573d2; border-radius: 13px; padding-top: 29px; }
.ct { height: 26px; display: flex; align-items: center; gap: 10px; padding-left: 2px; font-size: 20px; letter-spacing: -.03px; }
.ct .i { width: 24px; height: 24px; opacity: .62; }
.cm { height: 36px; margin-top: 22px; display: flex; align-items: center; font-size: 17px; }
.cm .avatar { opacity: .6; }
.p36 { width: 36px; height: 36px; }
.due { margin-left: 19px; color: #c3c1c3; flex: 1; }
.cnt { margin-right: 6px; color: #98979a; font-size: 17.500px; }
.cm .i { color: #98979a; } .cm .i:last-child { width: 19px; height: 19px; }
.coladd { height: 44px; margin-top: 17px; display: flex; align-items: center; justify-content: center; gap: 6px; -webkit-text-stroke: .35px; font-size: 20.200px; }
.hscroll { height: 23px; flex: none; background: #f0f0f0; display: flex; align-items: center; padding: 0 8px; }
.hscroll i { width: 143px; height: 21px; background: #c1c1c1; margin: 0 auto 0 261px; align-self: flex-end; }

/* task detail */
.panel { flex: 1; min-width: 0; background: #f8f8f8; border-left: 1px solid #e6e4e5; border-radius: 0 0 9px 0; display: flex; flex-direction: column; overflow: hidden; color: #6d6e6f; }
.dhead { height: 85px; flex: none; background: #fff; border-bottom: 1px solid #edeaea; display: flex; align-items: center; padding: 0 43px 0 36px; gap: 12px; box-shadow: 0 1px 4px #00000014; z-index: 1; }
.dhead h3 { font-size: 23px; padding-top: 1px; color: #1e1f21; white-space: nowrap; }
.acts { margin-left: auto; display: flex; gap: 29.800px; }
.acts .i { width: 24px; height: 24px; }
.feedwrap { flex: 1; min-height: 0; display: flex; overflow: hidden; }
.feed { flex: 1; padding: 0 58px 0 36px; margin-top: -30px; }
.story { display: flex; gap: 12px; }
.s1 { height: 70px; } .s2 { height: 92px; } .s3 { height: 89px; }
.s1 .sb { padding-top: 9px; }
.s2 .avatar, .s4 .avatar { margin-top: 2px; }
.big { width: 48px; height: 48px; margin-top: 9px; }
.sb { width: 609px; flex: none; }
.ln { height: 34px; line-height: 33px; color: #6d6e6f; white-space: nowrap; }
.ln b { font-weight: 700; color: #1e1f21; font-size: 20px; letter-spacing: -.02px; }
.ln small, .when { font-size: 17.500px; }
.ln.gray b { color: #6d6e6f; }
.ln.green, .ln.green b { color: #0d7f56; }
.when { line-height: 33px; }
.tx { line-height: 33px; margin-top: 1px; color: #424244; font-size: 20px; }
.url { color: #3f6ac4; white-space: nowrap; }
.u1 { letter-spacing: -.08px; }
.u2 { letter-spacing: .45px; }
.like { width: 24px; height: 24px; margin-top: 2px; }
.s3 .like { margin-top: -1px; }
.embed { width: 679px; height: 330px; margin-top: 5px; background: #fff; border: 1px solid #e9e7e8; border-radius: 10px; display: flex; flex-direction: column; align-items: center; padding-top: 4px; }
.etitle { margin-top: 49px; height: 48px; line-height: 48px; font-family: Inter, sans-serif; font-size: 31.500px; letter-spacing: .42px; color: #1e1e1e; white-space: nowrap; }
.elogin { width: 537px; height: 72px; margin-top: 50px; padding-bottom: 2px; border-radius: 12px; background: #2c2c2c; color: #f5f5f5; font-family: Inter, sans-serif; font-weight: 700; font-size: 26.500px; display: flex; align-items: center; justify-content: center; }
.vscroll { width: 23px; background: #f0f0f0; display: flex; flex-direction: column; align-items: center; padding: 10px 0; }
.vscroll i { width: 21px; height: 233px; background: #c1c1c1; margin: 331px 0 45px 2px; flex: none; }
.dfoot { height: 144px; flex: none; border-top: 1px solid #edeaea; background: #f8f8f8; padding: 12px 34px 0 36px; box-shadow: 0 -2px 6px #00000012; z-index: 1; }
.crow { display: flex; gap: 12px; }
.cinput { flex: 1; height: 48px; background: #fff; border: 1px solid #cfcbcb; border-radius: 8px; display: flex; align-items: center; padding-left: 12px; }
.collab { margin-top: 30px; height: 36px; display: flex; align-items: center; padding-left: 60px; gap: 6px; font-size: 17px; }
.t-col { width: 120px; }
.cplus { margin-left: 12px; }
.leave { margin-left: auto; padding-right: 19px; display: flex; align-items: center; gap: 5px; font-size: 20.200px; -webkit-text-stroke: .3px; }
.leave span { padding-top: 1px; }

/* taskbar */
.taskbar { height: 70px; margin-top: 4px; flex: none; background: #202020; display: flex; align-items: center; padding-bottom: 3px; color: #fff; font-size: 17px; position: relative; }
.weather { display: flex; align-items: center; width: 465px; padding-left: 29px; gap: 5px; }
.weather .i { margin-top: -5px; }
.wbadge { position: absolute; left: 53px; top: 7px; font-weight: 400; font-size: 17px; line-height: 24px; }
.wtext, .lang, .time { display: flex; flex-direction: column; line-height: 24px; }
.haze { color: #c9c9c9; font-size: 16.500px; }
.start { width: 36px; height: 36px; }
.tsearch { width: 326px; height: 44px; margin-left: 22px; border-radius: 22px; background: #f3f3f3; color: #5c5c5c; display: flex; align-items: center; padding: 0 3px 0 16px; gap: 14px; font-size: 18.500px; }
.dragon { margin: 4px 0 0 auto; }
.app { width: 36px; height: 36px; flex: none; position: relative; }
.a1 { margin-left: 20px; }
.chrome { margin-left: 30px; } .chrome .i { margin-top: -8px; }
.folder, .gear { margin-left: 30px; }
.tbox { width: 60px; height: 60px; border-radius: 6px; display: flex; align-items: center; justify-content: center; position: relative; margin-left: 18px; flex: none; }
.edge { background: #45282a; }
.qhelp { width: 46px; height: 46px; margin: -8px 0 0 18px; }
.asana { background: #2d2d2d; border: 1px solid #383838; margin-left: 8px; }
.vsc { margin-left: 18px; } .xam { margin-left: 30px; }
.run::after { content: ""; position: absolute; left: 50%; margin-left: -4.500px; bottom: -11px; width: 9px; height: 5px; border-radius: 3px; background: #9a9a9a; }
.edge.run::after { bottom: 1px; background: #ff99a4; }
.asana.run::after { bottom: 0; width: 24px; margin-left: -12px; background: #4cc2ff; }
.tup { width: 16px; height: 10px; margin-left: 50px; }
.cloud { width: 24px; height: 16px; margin-left: 28px; }
.lang { width: 34px; margin-left: 28px; align-items: center; line-height: 23px; font-size: 16.500px; }
.wifi { width: 24px; height: 17px; margin-left: 28px; }
.mute { width: 24px; height: 18px; margin-left: 12px; }
.batt { width: 24px; height: 16px; margin-left: 12px; }
.time { width: 118px; align-items: flex-end; letter-spacing: .35px; }
.tbell { width: 20px; height: 23px; margin-left: 13px; }
```
